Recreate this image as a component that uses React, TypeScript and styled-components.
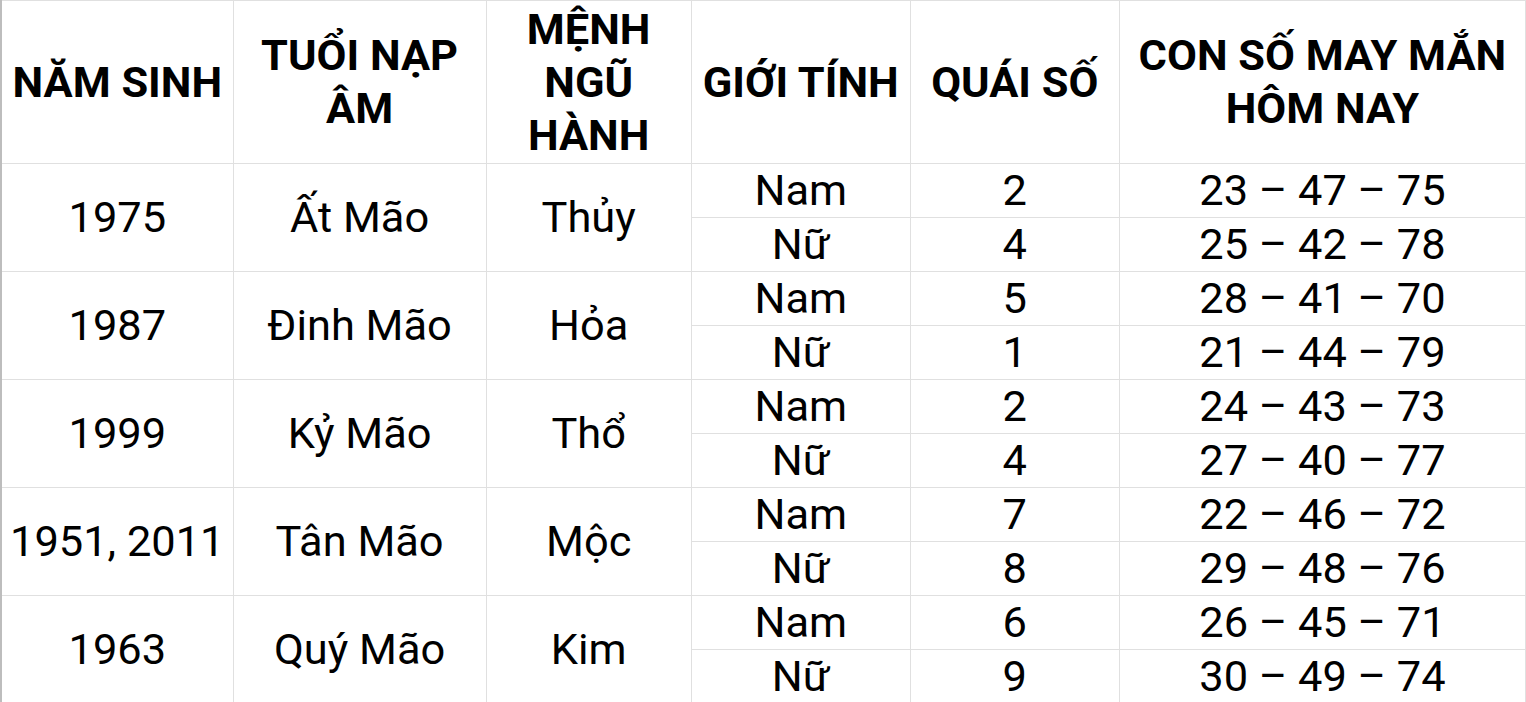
import React from "react";
import styled, { createGlobalStyle } from "styled-components";

const GlobalStyle = createGlobalStyle`
  html, body {
    margin: 0;
    padding: 0;
    background: #fff;
  }
  body {
    font-family: Roboto, "Noto Sans", "Liberation Sans", sans-serif;
    color: #000;
  }
`;

const Table = styled.table`
  width: 1526px;
  table-layout: fixed;
  border-collapse: collapse;
  font-size: 43.4px;
  border-left: 2px solid #bdbdbd;
`;

const HeadCell = styled.th`
  height: 162px;
  padding: 0 6px;
  font-weight: 700;
  line-height: 53px;
  text-align: center;
  vertical-align: middle;
  border: 1px solid #e0e0e0;
`;

const Cell = styled.td`
  height: 53px;
  padding: 0 4px;
  font-weight: 400;
  line-height: 50px;
  text-align: center;
  vertical-align: middle;
  border: 1px solid #e0e0e0;
  white-space: nowrap;
`;

type Row = {
  year: string;
  name: string;
  element: string;
  male: [string, string];
  female: [string, string];
};

const rows: Row[] = [
  { year: "1975", name: "Ất Mão", element: "Thủy", male: ["2", "23 – 47 – 75"], female: ["4", "25 – 42 – 78"] },
  { year: "1987", name: "Đinh Mão", element: "Hỏa", male: ["5", "28 – 41 – 70"], female: ["1", "21 – 44 – 79"] },
  { year: "1999", name: "Kỷ Mão", element: "Thổ", male: ["2", "24 – 43 – 73"], female: ["4", "27 – 40 – 77"] },
  { year: "1951, 2011", name: "Tân Mão", element: "Mộc", male: ["7", "22 – 46 – 72"], female: ["8", "29 – 48 – 76"] },
  { year: "1963", name: "Quý Mão", element: "Kim", male: ["6", "26 – 45 – 71"], female: ["9", "30 – 49 – 74"] },
];

const widths = [232, 253, 205, 219, 209, 406];

export default function App() {
  return (
    <>
      <GlobalStyle />
      <Table>
        <colgroup>
          {widths.map((w, i) => (
            <col key={i} style={{ width: w }} />
          ))}
        </colgroup>
        <thead>
          <tr>
            <HeadCell>NĂM SINH</HeadCell>
            <HeadCell>TUỔI NẠP ÂM</HeadCell>
            <HeadCell>MỆNH NGŨ HÀNH</HeadCell>
            <HeadCell>GIỚI TÍNH</HeadCell>
            <HeadCell>QUÁI SỐ</HeadCell>
            <HeadCell>CON SỐ MAY MẮN HÔM NAY</HeadCell>
          </tr>
        </thead>
        <tbody>
          {rows.map((r) => (
            <React.Fragment key={r.year}>
              <tr>
                <Cell rowSpan={2}>{r.year}</Cell>
                <Cell rowSpan={2}>{r.name}</Cell>
                <Cell rowSpan={2}>{r.element}</Cell>
                <Cell>Nam</Cell>
                <Cell>{r.male[0]}</Cell>
                <Cell>{r.male[1]}</Cell>
              </tr>
              <tr>
                <Cell>Nữ</Cell>
                <Cell>{r.female[0]}</Cell>
                <Cell>{r.female[1]}</Cell>
              </tr>
            </React.Fragment>
          ))}
        </tbody>
      </Table>
    </>
  );
}
